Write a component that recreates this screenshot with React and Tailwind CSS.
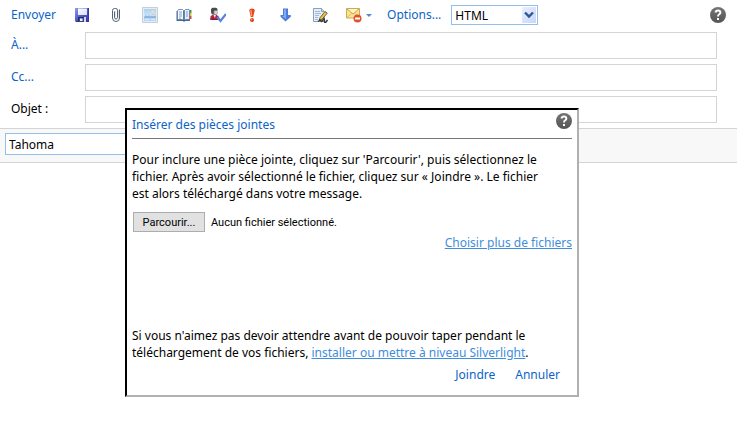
import { useRef } from "react";

const link = "cursor-pointer text-[#0a64c8] hover:underline";

function Icon({ children }) {
  return (
    <svg viewBox="0 0 16 16" className="block size-4 shrink-0" fill="none" aria-hidden="true">
      {children}
    </svg>
  );
}

function SaveIcon() {
  return (
    <Icon>
      <defs>
        <linearGradient id="disk" x1="0" y1="0" x2="1" y2="1">
          <stop offset="0" stopColor="#8f9cf0" />
          <stop offset="0.500" stopColor="#5058c4" />
          <stop offset="1" stopColor="#34389c" />
        </linearGradient>
        <linearGradient id="disk-label" x1="0" y1="0" x2="1" y2="1">
          <stop offset="0" stopColor="#ffffff" />
          <stop offset="1" stopColor="#d3dcf4" />
        </linearGradient>
      </defs>
      <path d="M1 1h14v14H2l-1-1z" fill="url(#disk)" />
      <path d="M14.500 1v13.500H2" stroke="#3438a0" />
      <path d="M4 1.500h9V8H4z" fill="url(#disk-label)" />
      <path d="M4 10h8v5H4z" fill="#252b66" />
      <path d="M5 11h6v4H5z" fill="#3c4488" />
      <path d="M6 11.500h2.500V14H6z" fill="#eef1fc" />
      <path d="M10 10h2v5h-2z" fill="#cfd6f2" />
    </Icon>
  );
}

function ClipIcon() {
  return (
    <Icon>
      <path
        d="M6.500 4.500v6a1.500 1.500 0 0 0 3 0V3.200a1.700 1.700 0 0 0-1.700-1.700H6.500a2 2 0 0 0-2 2v7.500a3.500 3.500 0 0 0 7 0V2.500"
        stroke="#5a6275"
      />
      <path d="M7.500 4v7M10.500 3v8" stroke="#d5d9e2" strokeWidth=".7" />
    </Icon>
  );
}

function PictureIcon() {
  return (
    <Icon>
      <defs>
        <linearGradient id="sky" x1="0" y1="0" x2="0" y2="1">
          <stop offset="0" stopColor="#a9d2f4" />
          <stop offset="1" stopColor="#dcedfa" />
        </linearGradient>
      </defs>
      <path d="M.5.5h15v15H.5z" fill="#e3edf6" stroke="#c5cfd9" />
      <path d="M2 2h12v9H2z" fill="url(#sky)" />
      <circle cx="11" cy="4.500" r="1.600" fill="#fbd9ae" />
      <path d="M2 10l3.500-3.500L8.500 9.500 11.500 7 14 9v2.500H2z" fill="#8eb5dc" />
      <path d="M4 8.500l1.500-1.500L7 8.500l-1.500.6zM10 8.700l1.500-1.200L13 8.700l-1.500.5z" fill="#e6f1fa" />
      <path d="M2 11h12v3H2z" fill="#b3d8f3" />
      <path d="M3 12.500h4M9 12.500h4" stroke="#dceefa" />
    </Icon>
  );
}

function BookIcon() {
  return (
    <Icon>
      <path d="M.5 4v10h6l1.500.8L9.500 14H14V4z" fill="#4a6b95" />
      <path d="M13.500 3H15.500v3h-2z" fill="#35a05a" />
      <path d="M13.500 6H15.500v3h-2z" fill="#f4b733" />
      <path d="M13.500 9H15.500v3h-2z" fill="#d6492f" />
      <path d="M2.500 2.500h4L8 4v9.500l-2-1H1.500V4z" fill="#f7faff" stroke="#5b789f" strokeWidth=".8" />
      <path d="M13 2.500H9.500L8 4v9.500l2-1h3.500V3z" fill="#e3edfa" stroke="#5b789f" strokeWidth=".8" />
      <path d="M3 5h3M3 7h3M3 9h3M3 11h2M10 5h2M10 7h2M10 9h2" stroke="#7fa0cb" />
      <path d="M8 4v10" stroke="#304a70" />
    </Icon>
  );
}

function CheckNamesIcon() {
  return (
    <Icon>
      <path d="M.5 12V9.500L2 8h5l1.500 1.500V12l-1 1h-6z" fill="#b3284a" />
      <path d="M3.500 8H6L4.800 11z" fill="#f6e6e7" />
      <path d="M.5 11v1.500h7.500M3 10v3" stroke="#74152f" strokeWidth=".7" />
      <rect x="1.500" y="1" width="6" height="7" rx="1.800" fill="#8b8b8e" />
      <path d="M1 5V2L2.500.8H6L7.500 2 7 3.200H4.500L3.500 4.500V7H2z" fill="#4a4a4e" />
      <path d="M4.500 4H7v2.500L6 7H4.500z" fill="#dad5d3" />
      <path d="M7.500 10l3 4L16 7" stroke="#5584e0" strokeWidth="2.200" />
    </Icon>
  );
}

function ImportantIcon() {
  return (
    <Icon>
      <path d="M5.200 3Q5.500 1.500 8 1.500T10.800 3L9.200 10H6.800z" fill="#e8461c" />
      <path d="M6.800 3l.9 6" stroke="#ff9d78" strokeWidth="1.300" />
      <circle cx="8" cy="13" r="2" fill="#dc3e16" />
      <circle cx="7.500" cy="12.500" r=".8" fill="#ffa07c" />
    </Icon>
  );
}

function LowIcon() {
  return (
    <Icon>
      <path d="M5 1.500h5V8h2.800v1.800L7.500 14.500 2.500 9.800V8H5z" fill="#4c7ddd" />
      <path d="M6 2.500h2V12L4 9h2z" fill="#82acf5" />
    </Icon>
  );
}

function SignatureIcon() {
  return (
    <Icon>
      <path d="M1.500 1.500h8l3 3v10h-11z" fill="#e6eefa" stroke="#8ba0bd" />
      <path d="M9.500 1.500v3h3" fill="#c3d3ea" stroke="#8ba0bd" />
      <path d="M3 4.500h5M3 6.500h6M3 8.500h4M3 10.500h3M3 12.500h3" stroke="#a3b9d9" />
      <path d="M13 4.500L15.300 6l-5.500 6.500-2.500 1 .6-2.700z" fill="#eec04d" stroke="#554720" strokeWidth=".8" />
      <path d="M7.200 13.500l.4-1.500 1 1z" fill="#222" />
      <path d="M6 14.500q2.500-2 3-.5t2-1.200 1.500 1.200 3-1" stroke="#38402e" strokeWidth="1.500" />
    </Icon>
  );
}

function MailBlockIcon() {
  return (
    <Icon>
      <path d="M.5 1.500h13v9.500H.5z" fill="#fce38f" stroke="#ccaa57" />
      <path d="M1 10.500l4.500-4M13 10.500L9 6.500" stroke="#dcbc66" />
      <path d="M1 2l6 5L13 2" fill="#fff3c0" stroke="#c5a352" />
      <circle cx="11.500" cy="11.500" r="4" fill="#e2532c" />
      <path d="M9 10.500h5v2H9z" fill="#fff" />
    </Icon>
  );
}

function HelpButton() {
  return (
    <button type="button" aria-label="Aide" className="shrink-0 cursor-pointer">
      <Icon>
        <defs>
          <linearGradient id="help" x1="0" y1="0" x2="0" y2="1">
            <stop offset="0" stopColor="#757575" />
            <stop offset="1" stopColor="#555555" />
          </linearGradient>
        </defs>
        <circle cx="8" cy="8" r="8" fill="url(#help)" />
        <path d="M5.500 5.500Q5.800 3.500 8 3.500t2.400 2q0 1-1.200 1.800Q8 8 8 9.500" stroke="#fff" strokeWidth="1.900" />
        <path d="M7 11h2v2H7z" fill="#fff" />
      </Icon>
    </button>
  );
}

const tools = [
  ["Enregistrer", SaveIcon],
  ["Joindre un fichier", ClipIcon],
  ["Insérer une image", PictureIcon],
  ["Carnet d'adresses", BookIcon],
  ["Vérifier les noms", CheckNamesIcon],
  ["Importance haute", ImportantIcon],
  ["Importance faible", LowIcon],
  ["Insérer une signature", SignatureIcon],
];

function Select({ label, value, className }) {
  return (
    <div className={`grid items-center border border-[#93bfeb] bg-white ${className}`}>
      <select
        aria-label={label}
        defaultValue={value}
        className="col-start-1 row-start-1 h-full w-full appearance-none bg-transparent px-[3px] outline-none"
      >
        <option>{value}</option>
      </select>
      <span className="pointer-events-none col-start-1 row-start-1 mr-px flex h-4 w-[14px] items-center justify-center justify-self-end bg-linear-to-br from-[#e8efff] to-[#c9d5fa]">
        <svg viewBox="0 0 10 8" className="h-2 w-[10px]" fill="none" aria-hidden="true">
          <path d="M1 1.500l4 4 4-4" stroke="#2d5792" strokeWidth="2.400" />
        </svg>
      </span>
    </div>
  );
}

function Field({ id, label, isLink }) {
  return (
    <div className="flex items-center">
      <label htmlFor={id} className={`w-[74px] shrink-0 pb-[2px] ${isLink ? link : ""}`}>
        {label}
      </label>
      <input id={id} type="text" className="h-[27px] min-w-0 flex-1 border border-[#d4d4d4] px-1 outline-none" />
    </div>
  );
}

function AttachmentDialog() {
  const file = useRef(null);
  return (
    <section
      role="dialog"
      aria-labelledby="dialog-title"
      className="absolute top-[108px] left-[125px] w-[454px] border-2 border-t-black border-r-[#b0b0b0] border-b-[#b0b0b0] border-l-black bg-white px-[5px] pb-3"
    >
      <header className="flex h-[29px] items-start justify-between border-b border-[#777] pt-[3px]">
        <h1 id="dialog-title" className="pt-[3px] text-[#0a64c8]">
          Insérer des pièces jointes
        </h1>
        <HelpButton />
      </header>
      <p className="pt-3 pr-5">
        Pour inclure une pièce jointe, cliquez sur 'Parcourir', puis sélectionnez le fichier. Après avoir
        sélectionné le fichier, cliquez sur « Joindre ». Le fichier est alors téléchargé dans votre message.
      </p>
      <div className="mt-[10px] flex items-center gap-[6px] px-px font-[Roboto,sans-serif] text-[11px]">
        <button
          type="button"
          onClick={() => file.current.click()}
          className="h-5 w-[72px] border border-[#adadad] bg-[#e1e1e1]"
        >
          Parcourir...
        </button>
        <label htmlFor="attachment">Aucun fichier sélectionné.</label>
        <input ref={file} id="attachment" type="file" className="hidden" />
      </div>
      <div className="mt-[2px] text-right">
        <a href="#fichiers" className="text-[#3f8ddc] underline">
          Choisir plus de fichiers
        </a>
      </div>
      <p className="mt-[76px] pr-5">
        Si vous n'aimez pas devoir attendre avant de pouvoir taper pendant le téléchargement de vos fichiers,{" "}
        <a href="#silverlight" className="text-[#3f8ddc] underline">
          installer ou mettre à niveau Silverlight
        </a>
        .
      </p>
      <footer className="mt-[5px] flex justify-end gap-5 pr-3">
        <button type="button" className={link}>Joindre</button>
        <button type="button" className={link}>Annuler</button>
      </footer>
    </section>
  );
}

export default function App() {
  return (
    <main className="relative min-h-screen bg-white font-[Noto_Sans,sans-serif] text-[12px] leading-[17px] text-black">
      <div className="flex h-8 items-center gap-[18px] pr-[11px] pb-[2px] pl-[11px]">
        <button type="button" className={`pb-px ${link}`}>Envoyer</button>
        {tools.map(([name, Glyph]) => (
          <button key={name} type="button" aria-label={name} className="shrink-0 cursor-pointer">
            <Glyph />
          </button>
        ))}
        <div className="flex items-center gap-[15px]">
          <button type="button" aria-label="Courrier indésirable" className="flex cursor-pointer items-center gap-1">
            <MailBlockIcon />
            <svg viewBox="0 0 6 3" className="h-[3px] w-[6px]" aria-hidden="true">
              <path d="M0 0h6L3 3z" fill="#5587d8" />
            </svg>
          </button>
          <button type="button" className={`pb-px ${link}`}>Options...</button>
        </div>
        <Select label="Format du message" value="HTML" className="-ml-2 h-5 w-[87px]" />
        <div className="ml-auto flex">
          <HelpButton />
        </div>
      </div>
      <div className="flex flex-col gap-[5px] pr-5 pb-[5px] pl-[11px]">
        <Field id="to" label="À..." isLink />
        <Field id="cc" label="Cc..." isLink />
        <Field id="subject" label="Objet :" />
      </div>
      <div className="border-y border-[#d4d4d4] bg-[#f8f8f8] px-[5px] pt-1 pb-[7px]">
        <Select label="Police" value="Tahoma" className="h-[22px] w-[150px]" />
      </div>
      <AttachmentDialog />
    </main>
  );
}
